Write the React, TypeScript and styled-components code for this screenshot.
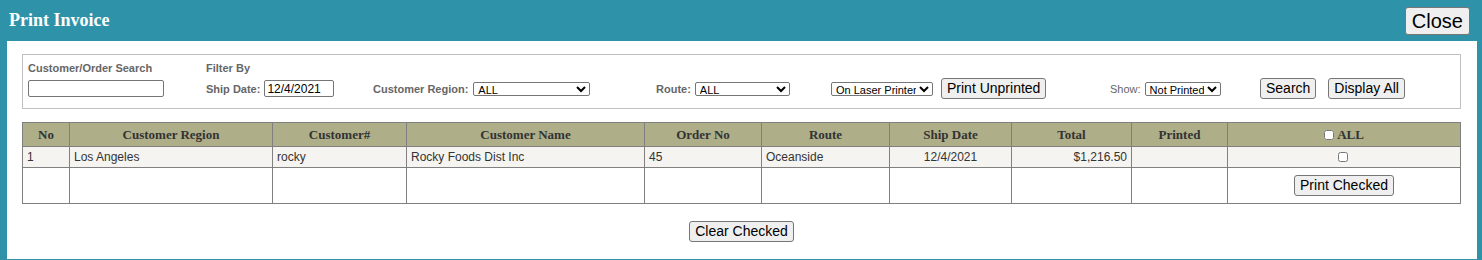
import { FC } from 'react';
import styled, { createGlobalStyle } from 'styled-components';

const colors = {
  teal: '#2e93a8',
  head: '#aeae88',
  rowAlt: '#f5f4f0',
  grid: '#808080',
  label: '#666666',
  text: '#333333',
};

const GlobalStyle = createGlobalStyle`
  html, body {
    margin: 0;
    padding: 0;
    background: ${colors.teal};
  }
  body {
    font-family: 'Liberation Sans', Arial, sans-serif;
  }
`;

const Page = styled.div`
  width: 1482px;
  height: 260px;
  box-sizing: border-box;
  padding: 0 5px 0 7px;
  background: ${colors.teal};
`;

const Header = styled.div`
  height: 41px;
  display: flex;
  align-items: center;
  justify-content: space-between;
  padding: 0 6px 0 2px;
  margin-right: 1px;
`;

const Title = styled.h1`
  margin: 0;
  font-family: 'Liberation Serif', 'Times New Roman', serif;
  font-size: 18px;
  font-weight: bold;
  color: #ffffff;
  padding-bottom: 1px;
`;

const Button = styled.button<{ $big?: boolean }>`
  font-family: 'Liberation Sans', Arial, sans-serif;
  font-size: ${(p) => (p.$big ? '20px' : '14px')};
  line-height: ${(p) => (p.$big ? '24px' : '17px')};
  padding: ${(p) => (p.$big ? '1px 6px' : '1px 5px')};
  color: #000;
  background: #efefef;
  border: 1px solid #767676;
  border-radius: 3px;
  cursor: pointer;
  white-space: nowrap;
`;

const Panel = styled.div`
  background: #ffffff;
  height: 218px;
  box-sizing: border-box;
  padding: 13px 16px 0 15px;
`;

const FilterBox = styled.div`
  border: 1px solid #c0c0c0;
  padding: 6px 5px 9px;
  display: grid;
  grid-template-columns: 178px 167px 283px 175px 279px 150px auto;
  grid-template-rows: 13px 21px;
  row-gap: 4px;
  align-items: center;
`;

const Label = styled.span<{ $plain?: boolean }>`
  font-size: 11px;
  font-weight: ${(p) => (p.$plain ? 'normal' : 'bold')};
  color: ${colors.label};
  white-space: nowrap;
`;

const Cell = styled.div<{ $gap?: number }>`
  display: flex;
  align-items: center;
  gap: ${(p) => p.$gap ?? 4}px;
  height: 100%;
`;

const TextInput = styled.input<{ $w: number }>`
  width: ${(p) => p.$w}px;
  height: 17px;
  box-sizing: border-box;
  border: 1px solid #767676;
  border-radius: 2px;
  padding: 0 2px;
  font-family: 'Liberation Sans', Arial, sans-serif;
  font-size: 12px;
  color: #000;
`;

const Select = styled.select<{ $w: number }>`
  width: ${(p) => p.$w}px;
  height: 14px;
  box-sizing: border-box;
  border: 1px solid #767676;
  border-radius: 2px;
  padding: 0;
  font-family: 'Liberation Sans', Arial, sans-serif;
  font-size: 11px;
  color: #000;
  background: #fff;
`;

const Table = styled.table`
  margin-top: 13px;
  width: 1439px;
  border-collapse: collapse;
  table-layout: fixed;
  border: 1px solid ${colors.grid};
`;

const Th = styled.th`
  background: ${colors.head};
  border: 1px solid ${colors.grid};
  height: 23px;
  padding: 0 4px;
  font-family: 'Liberation Serif', 'Times New Roman', serif;
  font-size: 13px;
  font-weight: bold;
  color: ${colors.text};
  text-align: center;
`;

const Td = styled.td<{ $align?: 'left' | 'center' | 'right'; $tall?: boolean }>`
  border: 1px solid ${colors.grid};
  height: ${(p) => (p.$tall ? 35 : 20)}px;
  padding: 0 4px;
  font-size: 12px;
  color: ${colors.text};
  text-align: ${(p) => p.$align ?? 'left'};
`;

const DataRow = styled.tr<{ $alt?: boolean }>`
  background: ${(p) => (p.$alt ? colors.rowAlt : '#ffffff')};
`;

const Check = styled.input`
  width: 10px;
  height: 10px;
  margin: 0 3px 0 0;
  vertical-align: -1px;
`;

const Footer = styled.div`
  display: flex;
  justify-content: center;
  margin-top: 17px;
`;

const columns = [
  { title: 'No', width: 47 },
  { title: 'Customer Region', width: 203 },
  { title: 'Customer#', width: 134 },
  { title: 'Customer Name', width: 238 },
  { title: 'Order No', width: 117 },
  { title: 'Route', width: 128 },
  { title: 'Ship Date', width: 122 },
  { title: 'Total', width: 120 },
  { title: 'Printed', width: 96 },
];

const Filters: FC = () => (
  <FilterBox>
    <Label>Customer/Order Search</Label>
    <Label>Filter By</Label>
    <span />
    <span />
    <span />
    <span />
    <span />

    <Cell>
      <TextInput $w={136} />
    </Cell>
    <Cell>
      <Label>Ship Date:</Label>
      <TextInput $w={70} defaultValue='12/4/2021' />
    </Cell>
    <Cell $gap={5}>
      <Label>Customer Region:</Label>
      <Select $w={117}>
        <option>ALL</option>
      </Select>
    </Cell>
    <Cell>
      <Label>Route:</Label>
      <Select $w={95}>
        <option>ALL</option>
      </Select>
    </Cell>
    <Cell $gap={8}>
      <Select $w={102}>
        <option>On Laser Printer</option>
      </Select>
      <Button>Print Unprinted</Button>
    </Cell>
    <Cell>
      <Label $plain>Show:</Label>
      <Select $w={76}>
        <option>Not Printed</option>
      </Select>
    </Cell>
    <Cell $gap={12}>
      <Button>Search</Button>
      <Button>Display All</Button>
    </Cell>
  </FilterBox>
);

export default function App() {
  return (
    <Page>
      <GlobalStyle />
      <Header>
        <Title>Print Invoice</Title>
        <Button $big>Close</Button>
      </Header>
      <Panel>
        <Filters />
        <Table>
          <colgroup>
            {columns.map((c) => (
              <col key={c.title} style={{ width: c.width }} />
            ))}
            <col />
          </colgroup>
          <thead>
            <tr>
              {columns.map((c) => (
                <Th key={c.title}>{c.title}</Th>
              ))}
              <Th>
                <Check type='checkbox' />
                ALL
              </Th>
            </tr>
          </thead>
          <tbody>
            <DataRow $alt>
              <Td>1</Td>
              <Td>Los Angeles</Td>
              <Td>rocky</Td>
              <Td>Rocky Foods Dist Inc</Td>
              <Td>45</Td>
              <Td>Oceanside</Td>
              <Td $align='center'>12/4/2021</Td>
              <Td $align='right'>$1,216.50</Td>
              <Td />
              <Td $align='center'>
                <Check type='checkbox' />
              </Td>
            </DataRow>
            <DataRow>
              <Td $tall />
              <Td $tall />
              <Td $tall />
              <Td $tall />
              <Td $tall />
              <Td $tall />
              <Td $tall />
              <Td $tall />
              <Td $tall />
              <Td $tall $align='center'>
                <Button>Print Checked</Button>
              </Td>
            </DataRow>
          </tbody>
        </Table>
        <Footer>
          <Button>Clear Checked</Button>
        </Footer>
      </Panel>
    </Page>
  );
}
